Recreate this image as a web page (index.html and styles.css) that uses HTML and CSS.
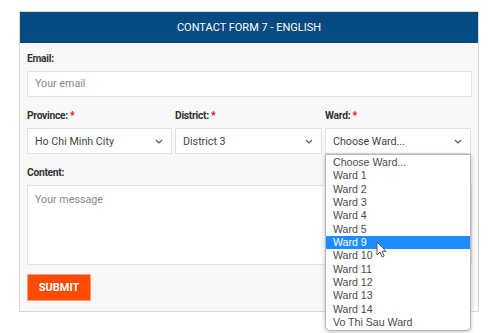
FILE: index.html
```html
<!DOCTYPE html>
<html lang="en">
<head>
<meta charset="UTF-8">
<meta name="viewport" content="width=device-width, initial-scale=1.0">
<title>Contact Form 7 - English</title>
<link rel="stylesheet" href="styles.css">
</head>
<body>

<div class="page">
  <div class="card">
    <div class="card-header">CONTACT FORM 7 - ENGLISH</div>

    <div class="card-body">
      <div class="field">
        <label class="label">Email:</label>
        <div class="input">Your email</div>
      </div>

      <div class="field-row">
        <div class="field">
          <label class="label">Province: <span class="req">*</span></label>
          <div class="select">
            <span>Ho Chi Minh City</span>
            <svg class="chevron" width="8" height="5" viewBox="0 0 8 5"><path d="M1 1l3 3 3-3" fill="none" stroke="#555" stroke-width="1.1"/></svg>
          </div>
        </div>
        <div class="field">
          <label class="label">District: <span class="req">*</span></label>
          <div class="select">
            <span>District 3</span>
            <svg class="chevron" width="8" height="5" viewBox="0 0 8 5"><path d="M1 1l3 3 3-3" fill="none" stroke="#555" stroke-width="1.1"/></svg>
          </div>
        </div>
        <div class="field ward-field">
          <label class="label">Ward: <span class="req">*</span></label>
          <div class="select">
            <span>Choose Ward...</span>
            <svg class="chevron" width="8" height="5" viewBox="0 0 8 5"><path d="M1 1l3 3 3-3" fill="none" stroke="#555" stroke-width="1.1"/></svg>
          </div>

          <!-- open dropdown of the ward select -->
          <ul class="dropdown">
            <li>Choose Ward...</li>
            <li>Ward 1</li>
            <li>Ward 2</li>
            <li>Ward 3</li>
            <li>Ward 4</li>
            <li>Ward 5</li>
            <li class="active">Ward 9</li>
            <li>Ward 10</li>
            <li>Ward 11</li>
            <li>Ward 12</li>
            <li>Ward 13</li>
            <li>Ward 14</li>
            <li>Vo Thi Sau Ward</li>
          </ul>
          <svg class="cursor" width="11" height="17" viewBox="0 0 11 17"><path d="M1 1v13l3-3 2.2 5 2-0.9-2.1-4.8H10z" fill="#fff" stroke="#555" stroke-width="1" stroke-linejoin="round"/></svg>
        </div>
      </div>

      <div class="field">
        <label class="label">Content:</label>
        <div class="textarea">Your message</div>
      </div>

      <button class="submit">SUBMIT</button>
    </div>
  </div>
</div>

</body>
</html>
```

FILE: styles.css
```css
body {
  margin: 0;
  background-color: #fff;
  font-family: Roboto, "Liberation Sans", Arial, sans-serif;
  color: #333;
}
.page {
  min-height: 333px;
  box-sizing: border-box;
  padding: 11px 21px 0 19px;
}
.card {
  width: 458px;
  border: 1px solid #d6d6d6;
  background-color: #f8f8f8;
}
.card-header {
  height: 31px;
  background-color: #054a80;
  color: #fff;
  font-size: 11px;
  line-height: 31px;
  text-align: center;
}
.card-body {
  padding: 9px 6px 10px 7px;
  display: flex;
  flex-direction: column;
  gap: 12px;
}
.field {
  display: flex;
  flex-direction: column;
  gap: 5px;
}
.field-row {
  display: grid;
  grid-template-columns: 145px 147px 146px;
  gap: 3px;
}
.ward-field {
  position: relative;
}
.label {
  font-size: 10.3px;
  font-weight: bold;
  line-height: 14px;
  letter-spacing: -0.3px;
}
.req {
  color: #e8000b;
}
.input, .select, .textarea {
  box-sizing: border-box;
  background-color: #fff;
  border: 1px solid #e2e2e2;
  font-size: 10.7px;
  color: #888;
  padding: 0 7px;
}
.input {
  height: 26px;
  line-height: 24px;
}
.select {
  height: 26px;
  display: flex;
  justify-content: space-between;
  align-items: center;
  color: #444;
}
.chevron {
  margin-right: 1px;
}
.textarea {
  height: 80px;
  padding-top: 6px;
  line-height: 16px;
}
.submit {
  align-self: flex-start;
  margin-top: -3px;
  width: 64px;
  height: 27px;
  border: 1px solid #ff9a7a;
  background-color: #ff4b00;
  color: #fff;
  font-family: Roboto, "Liberation Sans", Arial, sans-serif;
  font-weight: bold;
  font-size: 11px;
  padding: 0;
}
.dropdown {
  position: absolute;
  left: 0;
  top: 45px;
  width: 146px;
  box-sizing: border-box;
  margin: 0;
  padding: 1px 0;
  list-style: none;
  background-color: #fff;
  border: 1px solid #b8b8b8;
  border-radius: 0 0 5px 5px;
  box-shadow: 0 1px 4px rgba(0, 0, 0, 0.25);
  font-family: "Liberation Sans", Arial, sans-serif;
  font-size: 10.6px;
  color: #4a4a4a;
}
.dropdown li {
  height: 13.35px;
  line-height: 13.35px;
  padding-left: 7px;
}
.dropdown li.active {
  background-color: #1e8cff;
  color: #fff;
}
.cursor {
  position: absolute;
  left: 51px;
  top: 132px;
}
```
